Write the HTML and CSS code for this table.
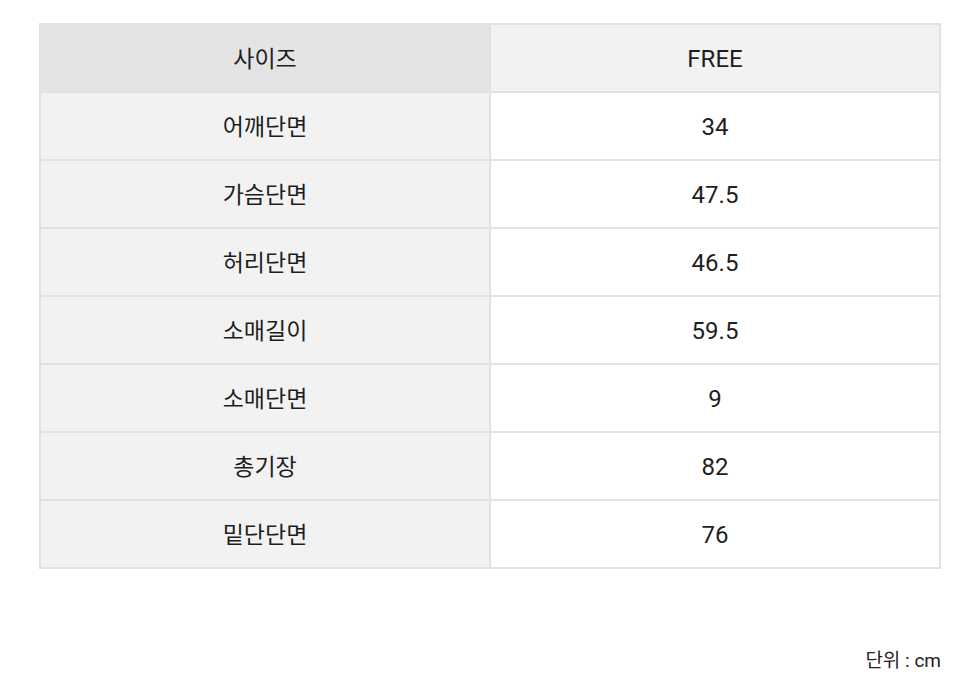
FILE: index.html
```html
<!DOCTYPE html>
<html lang="ko">
<head>
<meta charset="utf-8">
<link rel="stylesheet" href="styles.css">
</head>
<body>
<div class="wrap">
  <table class="size">
    <tr class="head"><th class="lab">사이즈</th><th class="val">FREE</th></tr>
    <tr><td class="lab">어깨단면</td><td class="val">34</td></tr>
    <tr><td class="lab">가슴단면</td><td class="val">47.5</td></tr>
    <tr><td class="lab">허리단면</td><td class="val">46.5</td></tr>
    <tr><td class="lab">소매길이</td><td class="val">59.5</td></tr>
    <tr><td class="lab">소매단면</td><td class="val">9</td></tr>
    <tr><td class="lab">총기장</td><td class="val">82</td></tr>
    <tr><td class="lab">밑단단면</td><td class="val">76</td></tr>
  </table>
  <p class="unit">단위 : cm</p>
</div>
</body>
</html>
```
FILE: styles.css
```css
html, body { margin: 0; padding: 0; background: #fff; }
body { font-family: Roboto, "Noto Sans CJK KR", sans-serif; color: #1e1e1e; }
.wrap { padding: 23px 39px 0 39px; }
.size {
  width: 902px;
  border-collapse: separate;
  border-spacing: 0;
  border-top: 2px solid #e2e2e2;
  border-left: 2px solid #e2e2e2;
  table-layout: fixed;
}
.size th, .size td {
  height: 64px;
  padding: 0 0 2px 0;
  border-right: 2px solid #e2e2e2;
  border-bottom: 2px solid #e2e2e2;
  text-align: center;
  vertical-align: middle;
  font-size: 23px;
  font-weight: 400;
  box-sizing: content-box;
}
.size .lab { width: 448px; background: #f2f2f2; }
.size .val { background: #fff; font-size: 24px; height: 65px; padding: 1px 0 0 0; }
.size .head .lab { background: #e4e4e4; }
.size .head .val { background: #f2f2f2; }
.unit {
  margin: 76px 0 0 0;
  text-align: right;
  font-size: 19px;
  color: #222;
}
```
